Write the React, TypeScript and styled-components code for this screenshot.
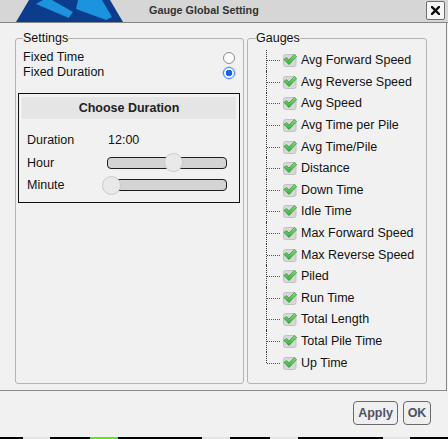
import React from "react";
import styled, { createGlobalStyle } from "styled-components";

const Global = createGlobalStyle`
  html, body { margin: 0; padding: 0; background: #f1f1f1; }
  body { font-family: "Liberation Sans", Arial, Helvetica, sans-serif; font-size: 12.5px; color: #111; }
  * { box-sizing: border-box; }
`;

const Page = styled.div`
  width: 448px;
  height: 439px;
  display: flex;
  flex-direction: column;
  background: #f1f1f1;
  overflow: hidden;
`;

const TitleBar = styled.div`
  height: 23px;
  flex: none;
  display: flex;
  align-items: center;
  background: #d6d6d6;
  border-bottom: 1px solid #858585;
`;

const Logo = styled.svg`
  display: block;
  margin-left: 16px;
  flex: none;
  align-self: flex-start;
`;

const Title = styled.div`
  margin-left: 25px;
  font-weight: bold;
  font-size: 10.8px;
  color: #333;
  padding-bottom: 2px;
`;

const CloseButton = styled.button`
  margin-left: auto;
  margin-right: 3px;
  width: 19px;
  height: 19px;
  padding: 0;
  display: flex;
  align-items: center;
  justify-content: center;
  background: #f6f6f6;
  border: 1px solid #6e6e6e;
  border-radius: 2px;
  align-self: flex-start;
  margin-top: 1px;
`;

const Frame = styled.div`
  height: 368px;
  width: 447px;
  flex: none;
  display: flex;
  gap: 3px;
  padding: 8px 0 6px 15px;
  border-right: 1px solid #8a8a8a;
  border-bottom: 1px solid #8a8a8a;
`;

const Group = styled.fieldset<{ $w: number; $pl: number; $pr: number }>`
  margin: 0;
  min-width: 0;
  width: ${(p) => p.$w}px;
  height: 353px;
  padding: 0 ${(p) => p.$pr}px 0 ${(p) => p.$pl}px;
  border: 1px solid #b4b4b4;
  border-radius: 3px;
`;

const Legend = styled.legend<{ $ml: number }>`
  padding: 0;
  margin-left: ${(p) => p.$ml}px;
  font-size: 12.5px;
  line-height: 14px;
`;

const RadioList = styled.div`
  margin-top: 5px;
  padding: 0 5px;
  display: flex;
  flex-direction: column;
`;

const RadioRow = styled.label`
  height: 15px;
  display: flex;
  align-items: center;
  justify-content: space-between;
  line-height: 15px;
`;

const Radio = styled.span<{ $on?: boolean }>`
  width: 12px;
  height: 12px;
  border-radius: 50%;
  flex: none;
  border: 1px solid ${(p) => (p.$on ? "#3e86f0" : "#8c8c8c")};
  background: ${(p) =>
    p.$on
      ? "radial-gradient(circle at center, #1664f5 0 3px, #ffffff 3.6px)"
      : "#ffffff"};
  box-shadow: ${(p) => (p.$on ? "0 0 0 0.5px #8fbaf7" : "none")};
`;

const DurationBox = styled.div`
  margin-top: 13px;
  width: 222px;
  height: 110px;
  border: 1px solid #111;
  padding: 3px 3px 0 3px;
  display: flex;
  flex-direction: column;
`;

const BoxHeader = styled.div`
  height: 22px;
  background: #e5e5e5;
  display: flex;
  align-items: center;
  justify-content: center;
  font-weight: bold;
  color: #222;
`;

const FieldGrid = styled.div`
  margin-top: 10px;
  padding-left: 5px;
  display: grid;
  grid-template-columns: 80px 120px;
  grid-auto-rows: 22.5px;
  align-items: center;
`;

const FieldValue = styled.span`
  padding-left: 1px;
`;

const Track = styled.div`
  position: relative;
  height: 12px;
  width: 120px;
  background: #d4d4d4;
  border: 1px solid #1e1e1e;
  border-radius: 4px;
`;

const Thumb = styled.span<{ $x: number }>`
  position: absolute;
  top: 50%;
  left: ${(p) => p.$x}px;
  width: 19px;
  height: 19px;
  margin: -9.5px 0 0 -9.5px;
  border-radius: 50%;
  background: #e9e8ea;
  border: 1px solid #cbcbcb;
`;

const Tree = styled.ul`
  list-style: none;
  margin: 4.5px 0 0 10px;
  padding: 0;
`;

const TreeRow = styled.li`
  height: 21.6px;
  display: flex;
  align-items: center;
`;

const Connector = styled.span<{ $last?: boolean }>`
  position: relative;
  align-self: stretch;
  width: 17px;
  flex: none;
  &::before {
    content: "";
    position: absolute;
    left: 0;
    top: 0;
    height: ${(p) => (p.$last ? "50%" : "100%")};
    border-left: 1px dotted #3a3a3a;
  }
  &::after {
    content: "";
    position: absolute;
    left: 1px;
    top: 50%;
    width: 13px;
    border-top: 1px dotted #555;
  }
`;

const Check = styled.svg`
  display: block;
  flex: none;
  margin-right: 4px;
`;

const Footer = styled.div`
  height: 46px;
  flex: none;
  display: flex;
  justify-content: flex-end;
  align-items: flex-start;
  gap: 5px;
  padding: 10px 17px 0 0;
`;

const Button = styled.button<{ $w: number }>`
  width: ${(p) => p.$w}px;
  height: 24px;
  padding: 0;
  font-family: "Liberation Sans", Arial, sans-serif;
  font-size: 12.5px;
  font-weight: bold;
  color: #4b5565;
  background: #efefef;
  border: 1px solid #6a6a6a;
  border-radius: 4px;
`;

const Strip = styled.div`
  height: 2px;
  flex: none;
  display: flex;
`;

const Seg = styled.span<{ $w: number; $c: string }>`
  width: ${(p) => p.$w}px;
  background: ${(p) => p.$c};
  flex: none;
`;

const gauges = [
  "Avg Forward Speed",
  "Avg Reverse Speed",
  "Avg Speed",
  "Avg Time per Pile",
  "Avg Time/Pile",
  "Distance",
  "Down Time",
  "Idle Time",
  "Max Forward Speed",
  "Max Reverse Speed",
  "Piled",
  "Run Time",
  "Total Length",
  "Total Pile Time",
  "Up Time",
];

const segments: [number, string][] = [
  [23, "#000"],
  [27, "#e4e4e4"],
  [40, "#000"],
  [28, "#55f000"],
  [84, "#000"],
  [28, "#e4e4e4"],
  [40, "#000"],
  [28, "#e4e4e4"],
  [85, "#000"],
  [27, "#e4e4e4"],
  [38, "#000"],
];

const CheckIcon = () => (
  <Check width="14" height="14" viewBox="0 0 14 14">
    <defs>
      <linearGradient id="chk" x1="0" y1="0" x2="0" y2="1">
        <stop offset="0" stopColor="#86e07a" />
        <stop offset="1" stopColor="#35a83c" />
      </linearGradient>
    </defs>
    <rect x="0.5" y="1.5" width="12.5" height="12" rx="2" fill="#d8d8d8" stroke="#c2c2c2" />
    <path d="M0.9 6.4 L3.6 4.6 L6 7 L11.4 1.4 L13.6 3.6 L6 11.6 Z" fill="url(#chk)" stroke="#2c9133" strokeWidth="0.7" strokeLinejoin="round" />
  </Check>
);

export default function App() {
  return (
    <Page>
      <Global />
      <TitleBar>
        <Logo width="108" height="22" viewBox="0 0 108 22">
          <polygon points="0,22 13,0 94,0 107,22" fill="#0c3d8c" />
          <polygon points="20,4 27,0 36,0 57,12 53,18" fill="#1b93dd" />
          <polygon points="62,0 86,0 96,17 90,20 60,9" fill="#1b93dd" />
          <polygon points="53,18 57,12 60,9 62,13" fill="#0c3d8c" />
        </Logo>
        <Title>Gauge Global Setting</Title>
        <CloseButton aria-label="close">
          <svg width="9" height="9" viewBox="0 0 9 9">
            <path d="M1 1 L8 8 M8 1 L1 8" stroke="#111" strokeWidth="2.4" strokeLinecap="square" />
          </svg>
        </CloseButton>
      </TitleBar>
      <Frame>
        <Group $w={229} $pl={2} $pr={3}>
          <Legend $ml={5}>Settings</Legend>
          <RadioList>
            <RadioRow>
              Fixed Time
              <Radio />
            </RadioRow>
            <RadioRow>
              Fixed Duration
              <Radio $on />
            </RadioRow>
          </RadioList>
          <DurationBox>
            <BoxHeader>Choose Duration</BoxHeader>
            <FieldGrid>
              <span>Duration</span>
              <FieldValue>12:00</FieldValue>
              <span>Hour</span>
              <Track>
                <Thumb $x={65} />
              </Track>
              <span>Minute</span>
              <Track>
                <Thumb $x={3} />
              </Track>
            </FieldGrid>
          </DurationBox>
        </Group>
        <Group $w={180} $pl={8} $pr={4}>
          <Legend $ml={0}>Gauges</Legend>
          <Tree>
            {gauges.map((g, i) => (
              <TreeRow key={g}>
                <Connector $last={i === gauges.length - 1} />
                <CheckIcon />
                <span>{g}</span>
              </TreeRow>
            ))}
          </Tree>
        </Group>
      </Frame>
      <Footer>
        <Button $w={45}>Apply</Button>
        <Button $w={28}>OK</Button>
      </Footer>
      <Strip>
        {segments.map(([w, c], i) => (
          <Seg key={i} $w={w} $c={c} />
        ))}
      </Strip>
    </Page>
  );
}
